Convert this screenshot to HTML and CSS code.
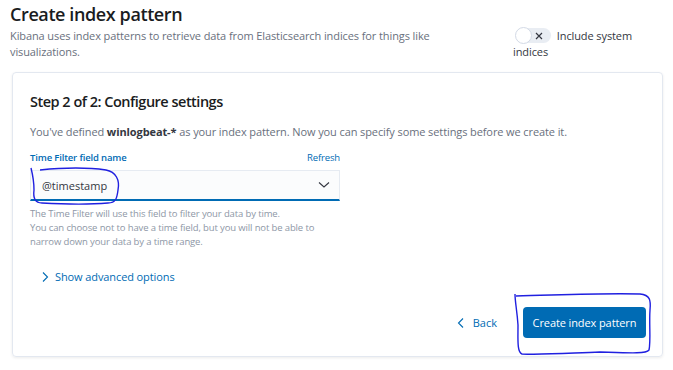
FILE: index.html
```html
<!DOCTYPE html>
<html lang="en">
<head>
  <meta charset="UTF-8">
  <title>Create index pattern</title>
  <link rel="stylesheet" href="styles.css">
</head>
<body>
  <div class="page">
    <header class="page-header">
      <div class="intro">
        <h1>Create index pattern</h1>
        <p>Kibana uses index patterns to retrieve data from Elasticsearch indices for things like visualizations.</p>
      </div>
      <div class="system-toggle">
        <span class="switch">
          <span class="knob"></span>
          <svg class="switch-x" width="8" height="8" viewBox="0 0 8 8"><path d="M1 1 L7 7 M7 1 L1 7" stroke="#343741" stroke-width="1.2" fill="none"/></svg>
        </span>
        Include system indices
      </div>
    </header>

    <div class="card">
      <h2>Step 2 of 2: Configure settings</h2>
      <p class="lead">You've defined <strong>winlogbeat-*</strong> as your index pattern. Now you can specify some settings before we create it.</p>

      <div class="field">
        <div class="field-label">
          <span>Time Filter field name</span>
          <a href="#">Refresh</a>
        </div>
        <div class="select">
          <span>@timestamp</span>
          <svg width="12" height="8" viewBox="0 0 12 8"><path d="M1 1.5 L6 6 L11 1.5" stroke="#343741" stroke-width="1.1" fill="none"/></svg>
        </div>
        <div class="help">
          The Time Filter will use this field to filter your data by time.<br>
          You can choose not to have a time field, but you will not be able to<br>
          narrow down your data by a time range.
        </div>
      </div>

      <a href="#" class="advanced">
        <svg width="8" height="12" viewBox="0 0 8 12"><path d="M2 1.5 L6.5 6 L2 10.5" stroke="#006bb4" stroke-width="1.1" fill="none"/></svg>
        Show advanced options
      </a>

      <div class="actions">
        <a href="#" class="back">
          <svg width="8" height="12" viewBox="0 0 8 12"><path d="M6 1.5 L1.5 6 L6 10.5" stroke="#006bb4" stroke-width="1.1" fill="none"/></svg>
          Back
        </a>
        <button class="primary">Create index pattern</button>
      </div>
    </div>
  </div>

  <!-- hand-drawn marks from the screenshot -->
  <svg class="marks" width="673" height="370" viewBox="0 0 673 370">
    <path d="M40 170 C60 168 85 167 106 170 C116 172 120 180 118 190 C117 198 116 203 108 203 C85 205 60 204 42 203 C35 203 33 198 34 190 C34 182 33 176 31 168" stroke="#2020e0" stroke-width="1.4" fill="none"/>
    <path d="M516 296 C560 295 600 293 640 294 C650 295 651 300 650 310 C649 325 651 340 649 350 C646 354 630 353 600 352 C570 353 545 355 522 354 C517 352 518 340 518 325 C517 310 515 302 515 294" stroke="#2020e0" stroke-width="1.4" fill="none"/>
  </svg>
</body>
</html>
```

FILE: styles.css
```css
* {
  box-sizing: border-box;
  margin: 0;
  padding: 0;
}

body {
  font-family: 'Open Sans', 'Liberation Sans', sans-serif;
  background-color: #fff;
  color: #343741;
  width: 673px;
  height: 370px;
  overflow: hidden;
  position: relative;
}

.page {
  padding: 0 10px 0 10px;
}

.page-header {
  display: flex;
  justify-content: space-between;
  height: 72px;
}

.intro {
  width: 445px;
}

.intro h1 {
  font-size: 18px;
  font-weight: 600;
  letter-spacing: -0.4px;
  line-height: 28px;
  color: #1a1c21;
}

.intro p {
  font-size: 11px;
  letter-spacing: -0.1px;
  line-height: 16px;
  color: #69707d;
}

.system-toggle {
  width: 150px;
  padding-top: 28px;
  font-size: 11px;
  letter-spacing: -0.1px;
  line-height: 16px;
  color: #343741;
}

.switch {
  display: inline-block;
  position: relative;
  width: 35px;
  height: 15px;
  border-radius: 8px;
  background: #e9edf3;
  vertical-align: -3px;
  margin-left: 3px;
  margin-right: 3px;
}

.knob {
  position: absolute;
  left: -1px;
  top: -1px;
  width: 17px;
  height: 17px;
  border-radius: 50%;
  background: #fff;
  border: 1px solid #d3dae6;
}

.switch-x {
  position: absolute;
  right: 8px;
  top: 4px;
}

.card {
  margin-left: 2px;
  width: 651px;
  height: 285px;
  border: 1px solid #e3e8f0;
  border-radius: 4px;
  box-shadow: 0 1px 3px rgba(0, 0, 0, 0.08);
  padding: 17px 16px 18px 17px;
  display: flex;
  flex-direction: column;
}

.card h2 {
  font-size: 14.5px;
  font-weight: 600;
  letter-spacing: -0.5px;
  line-height: 24px;
  color: #1a1c21;
}

.lead {
  margin-top: 9px;
  font-size: 11px;
  letter-spacing: -0.1px;
  line-height: 18px;
  color: #69707d;
}

.lead strong {
  color: #343741;
}

.field {
  width: 310px;
  margin-top: 10px;
}

.field-label {
  display: flex;
  justify-content: space-between;
  font-size: 9.5px;
  letter-spacing: -0.15px;
  line-height: 14px;
  font-weight: 600;
  color: #006bb4;
}

.field-label a {
  color: #006bb4;
  text-decoration: none;
  font-weight: 400;
}

.select {
  margin-top: 5px;
  height: 31px;
  background: #fbfcfd;
  border: 1px solid #e6ebf2;
  border-bottom: 2px solid #006bb4;
  display: flex;
  align-items: center;
  justify-content: space-between;
  padding: 0 9px 0 11px;
  font-size: 11px;
  color: #343741;
}

.help {
  margin-top: 6px;
  font-size: 9.5px;
  letter-spacing: -0.13px;
  line-height: 14px;
  color: #8e97a6;
}

.advanced {
  margin-top: 19px;
  margin-left: 11px;
  display: flex;
  align-items: center;
  gap: 6px;
  font-size: 11px;
  letter-spacing: -0.1px;
  line-height: 18px;
  color: #006bb4;
  text-decoration: none;
}

.actions {
  margin-top: auto;
  display: flex;
  justify-content: flex-end;
  align-items: center;
  gap: 26px;
}

.back {
  display: flex;
  align-items: center;
  gap: 8px;
  font-size: 11px;
  color: #006bb4;
  text-decoration: none;
}

.primary {
  width: 123px;
  height: 31px;
  border: none;
  border-radius: 4px;
  background: #006bb4;
  color: #fff;
  font-family: inherit;
  font-size: 11px;
  letter-spacing: -0.1px;
}

.marks {
  position: absolute;
  left: 0;
  top: 0;
  pointer-events: none;
}
```
